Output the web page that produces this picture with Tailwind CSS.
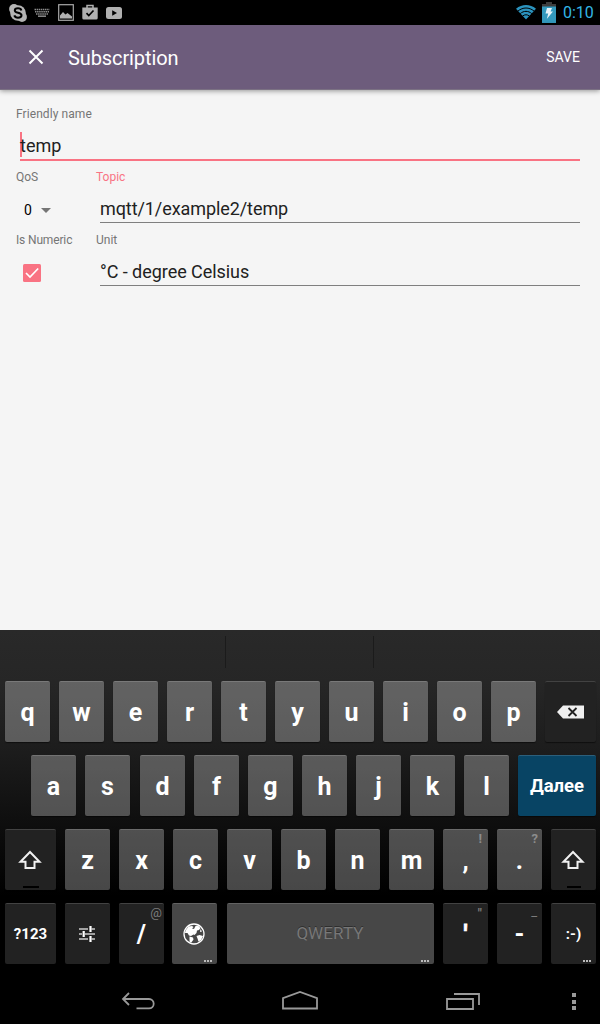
<!DOCTYPE html>
<html lang="en">
<head>
<meta charset="utf-8">
<title>Subscription</title>
<script src="https://cdn.jsdelivr.net/npm/@tailwindcss/browser@4"></script>
</head>
<body class="w-[600px] h-[1024px] overflow-hidden bg-[#f5f5f5] font-['Roboto',sans-serif] flex flex-col">

<!-- Status bar -->
<header class="h-[25px] shrink-0 bg-black flex items-center justify-between pl-[9px] pr-[6px]">
  <div class="flex items-center">
    <svg class="w-[18px] h-[18px]" viewBox="0 0 18 18"><circle cx="9" cy="9" r="7.800" fill="#b4b4b4"/><circle cx="5" cy="5" r="4.900" fill="#b4b4b4"/><circle cx="13" cy="13" r="4.900" fill="#b4b4b4"/><path d="M12.400 6.400C12 5 10.600 4.300 9 4.300c-1.900 0-3.200.8-3.200 2.200 0 3 6.700 1.600 6.700 4.800 0 1.500-1.500 2.400-3.500 2.400-1.800 0-3.200-.8-3.700-2.300" fill="none" stroke="#000" stroke-width="2"/></svg>
    <svg class="w-[16px] h-[10px] ml-[7px]" viewBox="0 0 16 10"><path d="M.5 1.500h15M1 3.700h14M2 5.900h12" stroke="#8c8c8c" stroke-width="1.500" stroke-dasharray="1.500 .6"/><path d="M4 8.200h8" stroke="#8c8c8c" stroke-width="1.500"/></svg>
    <svg class="w-[16px] h-[17px] ml-[8px]" viewBox="0 0 16 17"><rect x=".7" y=".7" width="14.600" height="15.600" fill="none" stroke="#a8a8a8" stroke-width="1.200"/><path d="M2 14.500v-3l3-3.500 2.500 2.500L9.500 9l4.500 3.500v2z" fill="#b0b0b0"/></svg>
    <svg class="w-[16px] h-[16px] ml-[8px] mb-[2px]" viewBox="0 0 16 16"><path d="M5 4V1.500h6V4" fill="none" stroke="#b0b0b0" stroke-width="1.500"/><path d="M.3 3.500h15.400v10.500a1.500 1.500 0 0 1-1.500 1.500H1.800a1.500 1.500 0 0 1-1.500-1.500z" fill="#b0b0b0"/><path d="M4.500 9.200l2.300 2.300 4.700-5" fill="none" stroke="#000" stroke-width="1.700"/></svg>
    <svg class="w-[16px] h-[12px] ml-[8px]" viewBox="0 0 16 12"><rect width="16" height="12" rx="2.500" fill="#b0b0b0"/><path d="M6.200 3.300v5.400L11 6z" fill="#000"/></svg>
  </div>
  <div class="flex items-center">
    <svg class="w-[20px] h-[16px] mb-[1px]" viewBox="0 0 20 16"><path d="M10 15.500L0 4.700C6-.3 14-.3 20 4.700z" fill="#2b93be"/><path d="M2 7c5-4 11-4 16 0M4.200 9.600c3.600-3 8-3 11.600 0M6.500 12.100c2.200-1.800 4.800-1.800 7 0" fill="none" stroke="#000" stroke-width="1"/></svg>
    <svg class="w-[14px] h-[21px] ml-[6px] mb-[1px]" viewBox="0 0 14 21"><path d="M4 0h6v2h4v3H0V2h4z" fill="#3d3d3d"/><path d="M0 4.500h14V21H0z" fill="#3399bd"/><path d="M5 6h5L8.500 9.500H11L4.800 17l1.400-5.500H3.500z" fill="#e8f4fa"/></svg>
    <span class="ml-[7px] w-[31px] text-[16px] leading-[25px] text-[#33b5e5] whitespace-nowrap">0:10</span>
  </div>
</header>

<!-- App bar -->
<div class="h-[65px] shrink-0 bg-[#6d5c7c] border-b border-[#7b7183] shadow-[0_1px_5px_rgba(0,0,0,0.4)] flex items-center pl-[28px] pr-[20px] text-white">
  <svg class="w-[16px] h-[16px]" viewBox="0 0 16 16"><path d="M1.500 1.500l13 13M14.500 1.500l-13 13" stroke="#fff" stroke-width="2"/></svg>
  <h1 class="ml-[24px] mt-[2px] text-[20px] leading-6 tracking-[-0.1px]">Subscription</h1>
  <button class="ml-auto text-[14px] leading-5">SAVE</button>
</div>

<!-- Form -->
<main class="h-[540px] shrink-0 pl-4 pr-5 pt-[16px] text-[12px] leading-4 text-[#757575]">
  <label class="block h-4 tracking-[0.08px]">Friendly name</label>
  <div class="ml-1 mt-[9px] h-[30px] border-b-2 border-[#f97383] flex items-center text-[18px] text-[#212121]">
    <span class="w-[2px] h-[25px] mb-[1px] bg-[#f97383] -mr-[2px] shrink-0"></span><span class="pt-[2px]">temp</span>
  </div>
  <div class="flex mt-[8px]">
    <div class="w-20">
      <div class="h-4">QoS</div>
      <div class="mt-[15px] ml-2 flex items-center gap-[9px] text-[14px] leading-5 text-black">0
        <svg class="w-[10px] h-[5px]" viewBox="0 0 10 5"><path d="M0 0h10L5 5z" fill="#757575"/></svg>
      </div>
    </div>
    <div class="flex-1">
      <div class="h-4 text-[#f97383]">Topic</div>
      <div class="ml-1 mt-[8px] h-[30px] pt-[2px] border-b border-[#7f7f7f] flex items-center text-[18px] tracking-[-0.08px] text-[#212121]">mqtt/1/example2/temp</div>
    </div>
  </div>
  <div class="flex mt-[9px]">
    <div class="w-20">
      <div class="h-4 tracking-[-0.15px]">Is Numeric</div>
      <svg class="mt-[16px] ml-[7px] w-[18px] h-[18px]" viewBox="0 0 18 18"><rect width="18" height="18" rx="1.500" fill="#f97383"/><path d="M3 9l4 4 8.200-8.500" fill="none" stroke="#fff" stroke-width="1.700"/></svg>
    </div>
    <div class="flex-1">
      <div class="h-4">Unit</div>
      <div class="ml-1 mt-[8px] h-[30px] pt-[2px] border-b border-[#7f7f7f] flex items-center text-[18px] tracking-[-0.05px] text-[#212121]">°C - degree Celsius</div>
    </div>
  </div>
</main>

<!-- Keyboard -->
<section class="h-[350px] shrink-0 bg-[linear-gradient(to_bottom,#292929_0%,#262626_15%,#1c1c1c_35%,#0f0f0f_54%,#000_76%)] text-white font-bold text-[25px]">
  <div class="h-[51px] flex pt-[6px]">
    <div class="w-[226px] h-8 border-r border-[#1b1b1b]"></div>
    <div class="w-[148px] h-8 border-r border-[#1b1b1b]"></div>
  </div>
  <div class="flex flex-col gap-[13px] pl-[5px] pr-[4px] [&_button]:h-[61px] [&_button]:pt-[1px] [&_button]:rounded-[2px] [&_button]:border-t [&_button]:border-white/15 [&_button]:flex [&_button]:items-center [&_button]:justify-center [&_button]:shrink-0 [&_button]:relative [&_button]:shadow-[0_1px_1px_rgba(0,0,0,0.5)]">
    <div class="flex gap-[9px]">
      <button class="w-[45px] bg-white/28">q</button><button class="w-[45px] bg-white/28">w</button><button class="w-[45px] bg-white/28">e</button><button class="w-[45px] bg-white/28">r</button><button class="w-[45px] bg-white/28">t</button><button class="w-[45px] bg-white/28">y</button><button class="w-[45px] bg-white/28">u</button><button class="w-[45px] bg-white/28">i</button><button class="w-[45px] bg-white/28">o</button><button class="w-[45px] bg-white/28">p</button>
      <button class="w-[51px] bg-[#222]" aria-label="Backspace"><svg class="w-[27px] h-[14px] mb-[2px] mr-[1px]" viewBox="0 0 27 14"><path d="M0 7L6 .5h21v13H6z" fill="#f0f0f0"/><path d="M11.500 3l8 8M19.500 3l-8 8" stroke="#222" stroke-width="1.800"/></svg></button>
    </div>
    <div class="flex gap-[9px] pl-[26px]">
      <button class="w-[45px] bg-white/28">a</button><button class="w-[45px] bg-white/28 mr-[1px]">s</button><button class="w-[45px] bg-white/28">d</button><button class="w-[45px] bg-white/28">f</button><button class="w-[45px] bg-white/28">g</button><button class="w-[45px] bg-white/28">h</button><button class="w-[45px] bg-white/28">j</button><button class="w-[45px] bg-white/28">k</button><button class="w-[45px] bg-white/28">l</button>
      <button class="w-[78px] bg-[#084464] text-[18.500px]">Далее</button>
    </div>
    <div class="flex gap-[9px]">
      <button class="w-[51px] bg-[#222]" aria-label="Shift"><svg class="w-[24px] h-[20px] mb-[1px] mr-[1px]" viewBox="0 0 24 20"><path d="M12 2L2.500 11.800h5V18h9v-6.200h5z" fill="none" stroke="#f0f0f0" stroke-width="2"/></svg><span class="absolute bottom-[2px] left-[18px] w-4 h-[2px] bg-black"></span></button>
      <button class="w-[45px] bg-white/28">z</button><button class="w-[45px] bg-white/28">x</button><button class="w-[45px] bg-white/28">c</button><button class="w-[45px] bg-white/28">v</button><button class="w-[45px] bg-white/28">b</button><button class="w-[45px] bg-white/28">n</button><button class="w-[45px] bg-white/28">m</button>
      <button class="w-[45px] bg-white/28">,<span class="absolute top-[1px] right-[6px] text-[13px] leading-4 text-[#8c8c8c]">!</span></button>
      <button class="w-[45px] bg-white/28">.<span class="absolute top-[1px] right-[4px] text-[13px] leading-4 text-[#8c8c8c]">?</span></button>
      <button class="w-[45px] bg-[#222]" aria-label="Shift"><svg class="w-[24px] h-[20px] mb-[1px] mr-[1px]" viewBox="0 0 24 20"><path d="M12 2L2.500 11.800h5V18h9v-6.200h5z" fill="none" stroke="#f0f0f0" stroke-width="2"/></svg><span class="absolute bottom-[2px] left-[16px] w-[14px] h-[2px] bg-black"></span></button>
    </div>
    <div class="flex gap-[9px]">
      <button class="w-[51px] bg-[#222] text-[15px]">?123</button>
      <button class="w-[45px] bg-[#222]" aria-label="Settings"><svg class="w-[16px] h-[16px] mb-[2px] mr-[1px]" viewBox="0 0 16 16"><path d="M0 3h9M12.500 3H16M0 8h3M6 8h10M0 13h9M12.500 13H16" stroke="#ccc" stroke-width="1.500"/><path d="M11.500 0v6M4.700 5v6M11.500 10v6" stroke="#fff" stroke-width="2.200"/></svg></button>
      <button class="w-[45px] bg-[#222]">/<span class="absolute top-[1px] right-[2px] text-[13px] leading-4 font-normal text-[#7c7c7c]">@</span></button>
      <button class="w-[45px] bg-white/28 -ml-[1px] mr-[1px]" aria-label="Language"><svg class="w-[22px] h-[22px] mb-[2px] mr-[1px]" viewBox="0 0 22 22"><circle cx="11" cy="11" r="10" fill="none" stroke="#fff" stroke-width="1.300"/><path d="M2.500 7.500l3-4L9 3l1.500 1L9 5.500l2 .5 1.500-3L15 2.500l2.500 2.500-1.500 2-2 .5-.5 2.500-2 2-1-.5L8 13l-2-.5L4.500 10H2zM17.500 6l1.500 2.500-2 .5zM6.500 13.500l3.500 1 .5 2-2.500 3.500-1.500-1.500zM13.500 13l3-1 3.500 1-2 4-2.500 1.500-1-3z" fill="#fff"/></svg><span class="absolute bottom-[2px] right-[5px] flex gap-[1px]"><i class="size-[2px] bg-[#bbb]"></i><i class="size-[2px] bg-[#bbb]"></i><i class="size-[2px] bg-[#bbb]"></i></span></button>
      <button class="w-[207px] bg-white/28 text-[17px] font-normal text-[#777]"><span class="mb-[2px] mr-[1px] tracking-[0.1px] [text-shadow:0_-1px_0_rgba(0,0,0,0.35)]">QWERTY</span><span class="absolute bottom-[2px] right-[5px] flex gap-[1px]"><i class="size-[2px] bg-[#bbb]"></i><i class="size-[2px] bg-[#bbb]"></i><i class="size-[2px] bg-[#bbb]"></i></span></button>
      <button class="w-[45px] bg-[#222]"><span class="[-webkit-text-stroke:0.8px_white]">'</span><span class="absolute top-[2px] right-[6px] text-[13px] leading-4 text-[#7c7c7c]">"</span></button>
      <button class="w-[45px] bg-[#222]">-<span class="absolute top-[0px] right-[5px] text-[13px] leading-4 font-normal text-[#7c7c7c]">_</span></button>
      <button class="w-[45px] bg-[#222] text-[15px]">:-)<span class="absolute bottom-[2px] right-[5px] flex gap-[1px]"><i class="size-[2px] bg-[#bbb]"></i><i class="size-[2px] bg-[#bbb]"></i><i class="size-[2px] bg-[#bbb]"></i></span></button>
    </div>
  </div>
</section>

<!-- Navigation bar -->
<nav class="h-[44px] shrink-0 bg-black flex items-start pt-[9px] pl-[121px] text-[#999]">
  <svg class="w-[34px] h-[22px]" viewBox="0 0 34 22"><path d="M2 10h26a4.700 4.700 0 0 1 0 9.400H15.500M8 4L2 10l6 6" fill="none" stroke="currentColor" stroke-width="1.800"/></svg>
  <svg class="ml-[126px] w-[38px] h-[22px]" viewBox="0 0 38 22"><path d="M2 19.500V9.200L19 3l17 6.200v10.300z" fill="none" stroke="currentColor" stroke-width="1.800"/></svg>
  <svg class="ml-[127px] w-[34px] h-[22px]" viewBox="0 0 34 22"><path d="M1 10h26v10H1zM8 5h25v11" fill="none" stroke="currentColor" stroke-width="1.800"/></svg>
  <div class="ml-[92px] mt-[4px] flex flex-col gap-[2.500px]"><i class="size-[4px] bg-[#999]"></i><i class="size-[4px] bg-[#999]"></i><i class="size-[4px] bg-[#999]"></i></div>
</nav>
</body>
</html>
